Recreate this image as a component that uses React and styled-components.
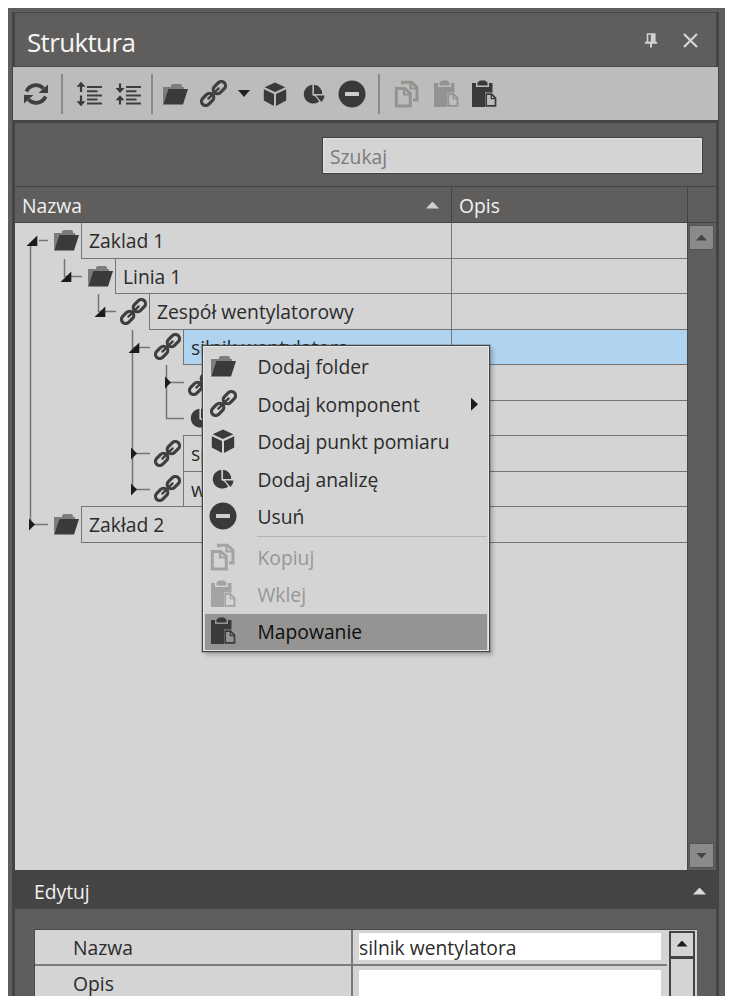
import React from 'react';
import styled, { createGlobalStyle } from 'styled-components';

const GlobalStyle = createGlobalStyle`
  * {
    box-sizing: border-box;
  }

  body {
    margin: 0;
    background: #ffffff;
    font-family: "Open Sans", "Noto Sans", sans-serif;
    font-size: 19.3px;
    color: #2b2b2b;
  }
`;

/* ---------- icons ---------- */

const Svg = styled.svg`
  display: block;
  flex: none;
`;

const FolderIcon = () => (
  <Svg width="26" height="26" viewBox="0 0 26 26">
    <path d="M1 22V6h8V4.500Q9.500 3 11 3h7q1.500 0 2 1.500V6h2v4H7z" fill="#7d7c7b" />
    <path d="M6.500 8H26l-5 15.500H1z" fill="#3a3a3a" />
  </Svg>
);

const LinkIcon = () => (
  <Svg width="27" height="27" viewBox="0 0 28 28" fill="none" stroke="#3f3f3f">
    <g transform="rotate(-45 14 14)">
      <rect x="-1.800" y="9.700" width="14.400" height="8.600" rx="4.300" strokeWidth="3.300" />
      <rect x="15.400" y="9.700" width="14.400" height="8.600" rx="4.300" strokeWidth="3.300" />
      <path d="M6.500 14h15" strokeWidth="2.400" strokeLinecap="round" />
    </g>
  </Svg>
);

const CubeIcon = () => (
  <Svg width="26" height="26" viewBox="0 0 26 26" fill="#3a3a3a">
    <path d="M13 1.500l10.300 4.700L13 11 2.700 6.200z" />
    <path d="M1.800 8.200L12 13v12L1.800 19.600z" />
    <path d="M24.200 8.200L14 13v12l10.200-5.400z" />
  </Svg>
);

const PieIcon = () => (
  <Svg width="26" height="26" viewBox="0 0 26 26" fill="#3a3a3a">
    <path d="M11.400 3.800v10.400l3 1.200 3.800 5A9.400 9.400 0 1 1 11.400 3.800z" />
    <path d="M13 3.800a8.800 8.800 0 0 1 8.200 9.200H13z" />
    <path d="M15 14.500h8.500q-.3 3.800-3 6.500z" />
  </Svg>
);

const RemoveIcon = () => (
  <Svg width="28" height="28" viewBox="0 0 28 28">
    <circle cx="14" cy="14" r="13.500" fill="#3a3a3a" />
    <rect x="7" y="12" width="14" height="4" rx="0.500" fill="#cfcfce" />
  </Svg>
);

const CopyIcon = ({ color }) => (
  <Svg width="26" height="28" viewBox="0 0 26 28" fill="none" stroke={color} strokeWidth="3">
    <path d="M8.500 4.500V2.300h9l5.500 5V20H19" />
    <path d="M16.500 2v6.500h6" strokeWidth="2.200" />
    <path d="M2.300 8.500h8.500l5.500 5V26h-14z" />
    <path d="M10 9v5.500h6" strokeWidth="2.200" />
  </Svg>
);

const PasteIcon = ({ color, paper }) => (
  <Svg width="26" height="28" viewBox="0 0 26 28">
    <path d="M1 3h4v4h13V3h3.500v9.500H14V27H1z" fill={color} />
    <path d="M6.500 5.500V2.500L9 .5h5l2.500 2v3z" fill={color} />
    <path d="M15.200 14.200h5.300l4 4v7.600h-9.300z" fill={paper} stroke={color} strokeWidth="1.700" />
    <path d="M20.300 14.500v4.200h4" fill="none" stroke={color} strokeWidth="1.300" />
  </Svg>
);

const RefreshIcon = () => (
  <Svg width="26" height="24" viewBox="0 0 26 24">
    <path d="M3.500 9.500C6 3 15 .8 20.500 6.500" fill="none" stroke="#3f3f3f" strokeWidth="3.800" />
    <path d="M25 2.500V11h-9.500z" fill="#3f3f3f" />
    <path d="M22.500 14.500C20 21 11 23.200 5.500 17.500" fill="none" stroke="#3f3f3f" strokeWidth="3.800" />
    <path d="M1 21.500V13h9.500z" fill="#3f3f3f" />
  </Svg>
);

const ListLines = () => <path d="M11 6h15M11 10.200h10.500M11 14.400h15M11 18.600h10.500M11 22.500h15" stroke="#3f3f3f" strokeWidth="2" />;

const ExpandIcon = () => (
  <Svg width="27" height="26" viewBox="0 0 27 26">
    <path d="M5 4v7M5 14.500v7" stroke="#3a3a3a" strokeWidth="2.200" />
    <path d="M5 .8l4.500 5H.5zM5 25.200l4.500-5H.5z" fill="#3a3a3a" />
    <ListLines />
  </Svg>
);

const CollapseIcon = () => (
  <Svg width="27" height="26" viewBox="0 0 27 26">
    <path d="M5 2.500v6M5 17.500v6" stroke="#3a3a3a" strokeWidth="2.200" />
    <path d="M5 12l4.500-5H.5zM5 14.200l4.500 5H.5z" fill="#3a3a3a" />
    <ListLines />
  </Svg>
);

const PinIcon = () => (
  <Svg width="14" height="15" viewBox="0 0 14 15">
    <path d="M3.500 1h7.300v8.500H3.500z" fill="none" stroke="#d0d0cf" strokeWidth="1.600" />
    <path d="M6.800 1h4v8.500h-4z" fill="#d0d0cf" />
    <path d="M.8 9.700h12.400M7 9.500V14.500" stroke="#d0d0cf" strokeWidth="2" />
  </Svg>
);

const CloseIcon = () => (
  <Svg width="15" height="15" viewBox="0 0 15 15">
    <path d="M1 1l13 13M14 1L1 14" stroke="#d6d6d5" strokeWidth="2.200" />
  </Svg>
);

const Arrow = styled.span`
  flex: none;
  width: ${({ $w }) => $w}px;
  height: ${({ $h }) => $h}px;
  background: ${({ $color }) => $color};
  clip-path: ${({ $dir }) =>
    $dir === 'up'
      ? 'polygon(50% 0, 100% 100%, 0 100%)'
      : $dir === 'down'
      ? 'polygon(0 0, 100% 0, 50% 100%)'
      : 'polygon(0 0, 100% 50%, 0 100%)'};
`;

const icons = {
  folder: FolderIcon,
  link: LinkIcon,
  cube: CubeIcon,
  pie: PieIcon,
  remove: RemoveIcon,
  copy: CopyIcon,
  paste: PasteIcon,
};

/* ---------- window ---------- */

const Page = styled.div`
  width: 729px;
  height: 1004px;
  padding: 8px 4px 8px 8px;
`;

const Frame = styled.div`
  height: 988px;
  padding: 4px 6px 0 4px;
  background: #5f5e5c;
  overflow: hidden;
`;

const Panel = styled.div`
  height: 984px;
  display: flex;
  flex-direction: column;
  border: solid #454443;
  border-width: 1px 3px 0;
`;

const TitleBar = styled.header`
  flex: none;
  height: 54px;
  display: flex;
  align-items: center;
  padding: 4px 18px 0 12px;
  border-bottom: 1px solid #4a4948;
`;

const Title = styled.h1`
  flex: 1;
  margin: 0;
  font-size: 26px;
  font-weight: 400;
  line-height: 36px;
  letter-spacing: -0.65px;
  color: #f6f6f6;
`;

const TitleActions = styled.div`
  display: flex;
  align-items: center;
  gap: 25px;
  padding-bottom: 2px;
`;

const Toolbar = styled.div`
  flex: none;
  height: 53px;
  display: flex;
  align-items: center;
  margin: 0 -2px;
  padding-left: 10px;
  background: #bdbcba;
`;

const Tool = styled.span`
  width: ${({ $w }) => $w || 38.5}px;
  display: flex;
  justify-content: center;
`;

const Divider = styled.span`
  width: 2px;
  height: 40px;
  margin: 0 ${({ $right }) => $right}px 0 ${({ $left }) => $left}px;
  background: #8b8a88;
`;

const SearchArea = styled.div`
  flex: none;
  height: 67px;
  display: flex;
  justify-content: flex-end;
  padding: 14px 13px 0 0;
  border-top: 3px solid #454443;
  border-bottom: 1px solid #454443;
`;

const SearchBox = styled.div`
  width: 381px;
  height: 37px;
  padding: 0 7px;
  border: 1px solid #3f3e3d;
  background: #d4d4d4;
  box-shadow: inset 0 0 0 1px #e4e4e4;
  color: #7b7b7b;
  line-height: 37px;
`;

const HeaderRow = styled.div`
  flex: none;
  height: 36px;
  display: flex;
  border-bottom: 1px solid #454443;
  color: #f2f2f2;
`;

const HeaderCell = styled.div`
  width: ${({ $w }) => $w}px;
  display: flex;
  align-items: center;
  justify-content: space-between;
  padding: 1px 12px 0 7px;
  border-right: 1px solid #454443;
`;

/* ---------- tree ---------- */

const TreeArea = styled.div`
  flex: none;
  height: 647px;
  display: flex;
`;

const Tree = styled.div`
  width: 672px;
  background: #d4d4d4;
`;

const Row = styled.div`
  height: 35.5px;
  display: flex;
`;

const NameCell = styled.div`
  flex: none;
  display: flex;
  width: 437px;
`;

const IconSlot = styled.span`
  width: 32px;
  display: flex;
  align-items: center;
  justify-content: center;
  padding: 0 0 1px ${({ $folder }) => ($folder ? 2 : 0)}px;
`;

const Name = styled.div`
  flex: 1;
  margin-top: -1px;
  padding-left: 7px;
  border: 1px solid #757575;
  border-top-color: ${({ $first }) => ($first ? 'transparent' : '#757575')};
  background: ${({ $selected }) => ($selected ? '#b0d3ef' : 'transparent')};
  line-height: 36px;
  white-space: nowrap;
`;

const Description = styled.div`
  flex: 1;
  margin-top: -1px;
  border: solid #757575;
  border-width: 1px 0;
  border-top-color: ${({ $first }) => ($first ? 'transparent' : '#757575')};
  background: ${({ $selected }) => ($selected ? '#b0d3ef' : 'transparent')};
`;

const branches = {
  first: 'M15.500 20V36M24 17.500h9',
  line: 'M15.500 0V36',
  corner: 'M15.500 0V17.500H33',
  cross: 'M15.500 0V36M15.500 17.500H33',
  blank: '',
};

const knobs = {
  open: 'M11.500 23L22.300 12.500v10.500z',
  closed: 'M14 11.500l6 6-6 6z',
};

const Twig = ({ branch, knob }) => (
  <Svg width="34" height="36" viewBox="0 0 34 36">
    <path d={branches[branch]} fill="none" stroke="#757575" strokeWidth="1.500" />
    {knob && <path d={knobs[knob]} fill="#1c1c1c" />}
  </Svg>
);

const rows = [
  { name: 'Zaklad 1', icon: 'folder', path: ['first'], knob: 'open' },
  { name: 'Linia 1', icon: 'folder', path: ['line', 'corner'], knob: 'open' },
  { name: 'Zespół wentylatorowy', icon: 'link', path: ['line', 'blank', 'corner'], knob: 'open' },
  { name: 'silnik wentylatora', icon: 'link', path: ['line', 'blank', 'blank', 'cross'], knob: 'open', selected: true },
  { name: '', icon: 'link', path: ['line', 'blank', 'blank', 'line', 'cross'], knob: 'closed' },
  { name: '', icon: 'pie', path: ['line', 'blank', 'blank', 'line', 'corner'] },
  { name: 'sp', icon: 'link', path: ['line', 'blank', 'blank', 'cross'], knob: 'closed' },
  { name: 'w', icon: 'link', path: ['line', 'blank', 'blank', 'corner'], knob: 'closed' },
  { name: 'Zakład 2', icon: 'folder', path: ['corner'], knob: 'closed' },
];

const TreeRow = ({ row, first }) => {
  const Icon = icons[row.icon];
  return (
    <Row>
      <NameCell>
        {row.path.map((branch, i) => (
          <Twig key={i} branch={branch} knob={i === row.path.length - 1 ? row.knob : null} />
        ))}
        <IconSlot $folder={row.icon === 'folder'}>
          <Icon />
        </IconSlot>
        <Name $first={first} $selected={row.selected}>{row.name}</Name>
      </NameCell>
      <Description $first={first} $selected={row.selected} />
    </Row>
  );
};

const ScrollTrack = styled.div`
  flex: 1;
  display: flex;
  flex-direction: column;
  align-items: center;
  justify-content: space-between;
  padding: 2px 1px 2px 0;
  border-left: 1px solid #4a4948;
`;

const ScrollButton = styled.span`
  width: 25px;
  height: 25px;
  display: flex;
  align-items: center;
  justify-content: center;
  border: 1px solid #555453;
  background: #8b8a88;
`;

/* ---------- context menu ---------- */

const Menu = styled.div`
  position: absolute;
  left: 202px;
  top: 345px;
  width: 288px;
  height: 307px;
  padding: 2px 1px 0;
  border: 1px solid #444444;
  outline: 1px solid rgba(60, 60, 60, 0.25);
  background: #d4d4d4;
  box-shadow: inset 0 0 0 1px #e6e6e6, 3px 3px 4px rgba(0, 0, 0, 0.22);
`;

const MenuItem = styled.div`
  height: ${({ $active }) => ($active ? 36.5 : 37.5)}px;
  display: flex;
  align-items: center;
  margin: 0 1px;
  padding-right: 9px;
  background: ${({ $active }) => ($active ? '#959492' : 'transparent')};
  color: ${({ $active, $disabled }) => ($disabled ? '#979797' : $active ? '#0d0d0d' : '#2b2b2b')};
`;

const MenuIcon = styled.span`
  width: 36px;
  display: flex;
  justify-content: center;
  padding-bottom: 1px;
`;

const MenuLabel = styled.span`
  flex: 1;
  padding-left: 16.500px;
`;

const MenuLine = styled.div`
  height: 3px;
  margin: 0 1px 0 53px;
  border-top: 1px solid #b5b5b5;
`;

const menu = [
  { label: 'Dodaj folder', icon: 'folder' },
  { label: 'Dodaj komponent', icon: 'link', submenu: true },
  { label: 'Dodaj punkt pomiaru', icon: 'cube' },
  { label: 'Dodaj analizę', icon: 'pie' },
  { label: 'Usuń', icon: 'remove' },
  { line: true },
  { label: 'Kopiuj', icon: 'copy', disabled: true },
  { label: 'Wklej', icon: 'paste', disabled: true },
  { label: 'Mapowanie', icon: 'paste', active: true },
];

const ContextMenu = () => (
  <Menu>
    {menu.map((item, i) => {
      if (item.line) return <MenuLine key={i} />;
      const Icon = icons[item.icon];
      return (
        <MenuItem key={i} $active={item.active} $disabled={item.disabled}>
          <MenuIcon>
            <Icon color={item.disabled ? '#a3a3a3' : '#3a3a3a'} paper={item.active ? '#959492' : '#d4d4d4'} />
          </MenuIcon>
          <MenuLabel>{item.label}</MenuLabel>
          {item.submenu && <Arrow $dir="right" $w={7} $h={13} $color="#1c1c1c" />}
        </MenuItem>
      );
    })}
  </Menu>
);

/* ---------- edit section ---------- */

const EditHeader = styled.div`
  flex: none;
  height: 39px;
  display: flex;
  align-items: center;
  justify-content: space-between;
  padding: 3px 10px 0 19px;
  background: #444444;
  color: #f2f2f2;
`;

const EditArea = styled.div`
  flex: 1;
  padding: 20px 19px 0;
`;

const PropertyGrid = styled.div`
  height: 67px;
  display: flex;
  border: solid #4a4948;
  border-width: 1px 0 0 1px;
  background: #d4d4d4;
  overflow: hidden;
`;

const Properties = styled.div`
  flex: 1;
`;

const Property = styled.div`
  height: 35.5px;
  display: flex;
  border-bottom: 2px solid #7a7a7a;
`;

const PropertyName = styled.div`
  width: 318px;
  padding-left: 38px;
  border-right: 2px solid #7a7a7a;
  line-height: 36px;
`;

const PropertyValue = styled.div`
  width: 302px;
  height: ${({ $tall }) => ($tall ? 34 : 27)}px;
  margin: ${({ $tall }) => ($tall ? 4 : 3)}px 0 0 6px;
  background: #ffffff;
  line-height: 30px;
`;

const GridScroll = styled.div`
  width: 26px;
  display: flex;
  flex-direction: column;
  margin: 1px 2px 0 2px;
  border: solid #444444;
  border-width: 2px 2px 0;
`;

const GridScrollButton = styled.span`
  height: 26px;
  display: flex;
  align-items: center;
  justify-content: center;
  padding-bottom: 2px;
  border-bottom: 3px solid #444444;
`;

export default function App() {
  return (
    <Page>
      <GlobalStyle />
      <Frame>
        <Panel>
          <TitleBar>
            <Title>Struktura</Title>
            <TitleActions>
              <PinIcon />
              <CloseIcon />
            </TitleActions>
          </TitleBar>

          <Toolbar>
            <Tool $w={26}><RefreshIcon /></Tool>
            <Divider $left={12} $right={7.5} />
            <Tool><ExpandIcon /></Tool>
            <Tool $w={38}><CollapseIcon /></Tool>
            <Divider $left={4} $right={3} />
            <Tool $w={38}><FolderIcon /></Tool>
            <Tool $w={38}><LinkIcon /></Tool>
            <Tool $w={24}><Arrow $dir="down" $w={12} $h={7} $color="#222222" /></Tool>
            <Tool><CubeIcon /></Tool>
            <Tool><PieIcon /></Tool>
            <Tool><RemoveIcon /></Tool>
            <Divider $left={6} $right={8} />
            <Tool><CopyIcon color="#949391" /></Tool>
            <Tool $w={39}><PasteIcon color="#949391" paper="#bdbcba" /></Tool>
            <Tool><PasteIcon color="#3a3a3a" paper="#bdbcba" /></Tool>
          </Toolbar>

          <SearchArea>
            <SearchBox>Szukaj</SearchBox>
          </SearchArea>

          <HeaderRow>
            <HeaderCell $w={437}>
              Nazwa
              <Arrow $dir="up" $w={13} $h={7} $color="#cfcfce" />
            </HeaderCell>
            <HeaderCell $w={236}>Opis</HeaderCell>
          </HeaderRow>

          <TreeArea>
            <Tree>
              {rows.map((row, i) => (
                <TreeRow key={i} row={row} first={i === 0} />
              ))}
            </Tree>
            <ScrollTrack>
              <ScrollButton><Arrow $dir="up" $w={11} $h={6} $color="#444444" /></ScrollButton>
              <ScrollButton><Arrow $dir="down" $w={11} $h={6} $color="#444444" /></ScrollButton>
            </ScrollTrack>
          </TreeArea>

          <EditHeader>
            Edytuj
            <Arrow $dir="up" $w={13} $h={7} $color="#dcdcdc" />
          </EditHeader>

          <EditArea>
            <PropertyGrid>
              <Properties>
                <Property>
                  <PropertyName>Nazwa</PropertyName>
                  <PropertyValue>silnik wentylatora</PropertyValue>
                </Property>
                <Property>
                  <PropertyName>Opis</PropertyName>
                  <PropertyValue $tall />
                </Property>
              </Properties>
              <GridScroll>
                <GridScrollButton><Arrow $dir="up" $w={11} $h={6} $color="#1c1c1c" /></GridScrollButton>
              </GridScroll>
            </PropertyGrid>
          </EditArea>
        </Panel>
      </Frame>
      <ContextMenu />
    </Page>
  );
}
